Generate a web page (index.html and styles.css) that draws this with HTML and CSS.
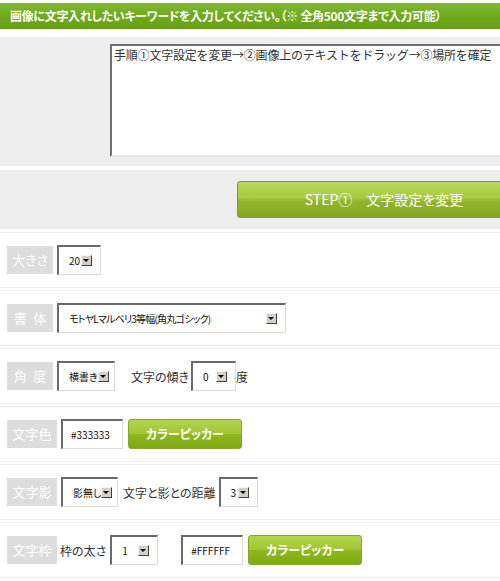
FILE: index.html
```html
<!DOCTYPE html>
<html lang="ja">
<head>
<meta charset="utf-8">
<title>文字入れ</title>
<link rel="stylesheet" href="styles.css">
</head>
<body>
<div class="page">
  <div class="hdr">画像に文字入れしたいキーワードを入力してください。（※ 全角500文字まで入力可能）</div>

  <div class="panel panel-text">
    <textarea class="ta" readonly>手順①文字設定を変更→②画像上のテキストをドラッグ→③場所を確定</textarea>
  </div>

  <div class="panel panel-step">
    <div class="step-btn">STEP①　文字設定を変更</div>
  </div>

  <div class="row row-first">
    <span class="lbl lbl-n">大きさ</span>
    <span class="sel w-size"><span class="val">20</span><i class="arr"></i></span>
  </div>

  <div class="row">
    <span class="lbl lbl-n">書&ensp;体</span>
    <span class="sel w-font"><span class="val val-font">モトヤLマルベリ3等幅(角丸ゴシック)</span><i class="arr"></i></span>
  </div>

  <div class="row">
    <span class="lbl lbl-n">角&ensp;度</span>
    <span class="sel w-dir"><span class="val">横書き</span><i class="arr"></i></span>
    <span class="txt m-tilt">文字の傾き</span>
    <span class="sel w-tilt m-2"><span class="val">0</span><i class="arr"></i></span>
    <span class="txt m-0">度</span>
  </div>

  <div class="row">
    <span class="lbl">文字色</span>
    <span class="inp">#333333</span>
    <span class="pick">カラーピッカー</span>
  </div>

  <div class="row">
    <span class="lbl">文字影</span>
    <span class="sel w-shadow"><span class="val">影無し</span><i class="arr"></i></span>
    <span class="txt m-5">文字と影との距離</span>
    <span class="sel w-dist m-3"><span class="val">3</span><i class="arr"></i></span>
  </div>

  <div class="row">
    <span class="lbl">文字枠</span>
    <span class="txt m-3">枠の太さ</span>
    <span class="sel w-frame"><span class="val">1</span><i class="arr"></i></span>
    <span class="inp m-23">#FFFFFF</span>
    <span class="pick">カラーピッカー</span>
  </div>
</div>
</body>
</html>
```

FILE: styles.css
```css
html, body {
  margin: 0;
  padding: 0;
  overflow: hidden;
  background: #ffffff;
}

body {
  font-family: "Noto Sans CJK JP", "Noto Sans", sans-serif;
  color: #333333;
  width: 500px;
  height: 581px;
}

.page {
  width: 500px;
  overflow: hidden;
}

.hdr {
  margin-top: 3px;
  height: 26px;
  line-height: 26px;
  padding-left: 10px;
  background: linear-gradient(#82ba33 0%, #71ab20 45%, #67a117 100%);
  border-bottom: 1px solid #5f9612;
  box-sizing: border-box;
  color: #ffffff;
  font-size: 12px;
  font-weight: bold;
  letter-spacing: -0.3px;
  font-feature-settings: "palt";
  white-space: nowrap;
  overflow: hidden;
}

.panel {
  background: #eeeeee;
  overflow: hidden;
  white-space: nowrap;
}

.panel-text {
  margin-top: 8px;
  padding: 7px 0 9px 110px;
  height: 113px;
}

.ta {
  display: block;
  width: 420px;
  height: 113px;
  box-sizing: border-box;
  margin: 0;
  padding: 1px 2px;
  resize: none;
  border-style: solid;
  border-width: 2px;
  border-color: #6f6f6f #e6e6e6 #e6e6e6 #6f6f6f;
  background: #ffffff;
  color: #333333;
  font-family: "Noto Sans CJK JP", sans-serif;
  font-size: 12px;
  letter-spacing: -0.2px;
  line-height: 15px;
  overflow: hidden;
  outline: none;
}

.panel-step {
  margin-top: 4px;
  padding: 11px 0 11px 237px;
  height: 37px;
}

.step-btn {
  width: 294px;
  height: 37px;
  box-sizing: border-box;
  border: 1px solid #7f9d2e;
  border-radius: 3px;
  background: linear-gradient(#bad85c 0%, #a8ca45 45%, #92b42c 55%, #88a823 100%);
  color: #ffffff;
  font-size: 14px;
  line-height: 35px;
  text-align: center;
  font-feature-settings: "palt";
}

.row {
  display: flex;
  align-items: center;
  gap: 4px;
  margin-top: 2px;
  height: 30px;
  padding: 12px 0 12px 7px;
  border-top: 1px solid #ececec;
  border-bottom: 1px solid #ececec;
  white-space: nowrap;
}

.row-first {
  margin-top: 3px;
}

.lbl {
  flex: none;
  width: 50px;
  height: 28px;
  line-height: 28px;
  text-align: center;
  background: #dddddd;
  color: #ffffff;
  font-size: 13px;
  font-feature-settings: "palt";
}

.lbl-n {
  width: 46px;
}

.sel {
  flex: none;
  display: flex;
  align-items: center;
  justify-content: space-between;
  height: 30px;
  box-sizing: border-box;
  padding: 0 8px 0 10px;
  border-style: solid;
  border-width: 2px 1px 1px 2px;
  border-color: #6a6a6a #dedbd2 #dedbd2 #6a6a6a;
  background: #ffffff;
  color: #111111;
  font-size: 10px;
  font-feature-settings: "palt";
}

.val-font {
  letter-spacing: -0.8px;
}

.arr {
  flex: none;
  position: relative;
  width: 11px;
  height: 11px;
  box-sizing: border-box;
  background: #d4d0c8;
  border-style: solid;
  border-width: 1px;
  border-color: #f4f4f4 #404040 #404040 #f4f4f4;
}

.arr::after {
  content: "";
  position: absolute;
  left: 1px;
  top: 3px;
  border-left: 3px solid transparent;
  border-right: 3px solid transparent;
  border-top: 3px solid #000000;
}

.w-size { width: 44px; }
.w-font { width: 229px; }
.w-dir { width: 58px; }
.w-tilt { width: 45px; }
.w-shadow { width: 57px; }
.w-dist { width: 39px; }
.w-frame { width: 48px; }

.txt {
  flex: none;
  font-size: 12px;
  color: #333333;
  font-feature-settings: "palt";
}

.m-tilt { margin-left: 12px; }
.m-0 { margin-left: -4px; }
.m-2 { margin-left: -2px; }
.m-3 { margin-left: -1px; }
.m-5 { margin-left: 1px; }
.m-23 { margin-left: 19px; }

.inp {
  flex: none;
  width: 62px;
  height: 30px;
  box-sizing: border-box;
  padding-left: 8px;
  line-height: 27px;
  border-style: solid;
  border-width: 2px 1px 1px 2px;
  border-color: #6a6a6a #dedbd2 #dedbd2 #6a6a6a;
  background: #ffffff;
  color: #111111;
  font-size: 10px;
}

.pick {
  flex: none;
  margin-left: 1px;
  width: 114px;
  height: 30px;
  box-sizing: border-box;
  border: 1px solid #86a92a;
  border-radius: 3px;
  background: linear-gradient(#b3d54b 0%, #a2c636 48%, #8db71f 52%, #80aa12 100%);
  color: #ffffff;
  font-size: 12px;
  font-weight: bold;
  line-height: 28px;
  text-align: center;
  font-feature-settings: "palt";
}
```
